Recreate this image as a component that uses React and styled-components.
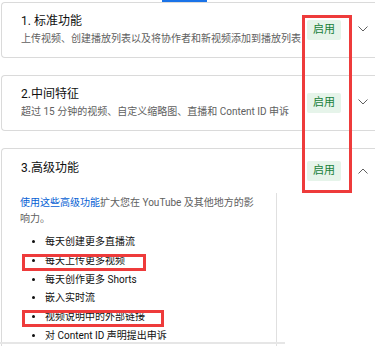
import React from 'react';
import styled, { createGlobalStyle } from 'styled-components';

const GlobalStyle = createGlobalStyle`
	html, body {
		margin: 0;
		padding: 0;
		background: #fff;
		overflow: hidden;
	}
	body {
		font-family: Roboto, "Noto Sans CJK SC", "Noto Sans", sans-serif;
	}
`;

const features = [
	{
		title: '1. 标准功能',
		desc: '上传视频、创建播放列表以及将协作者和新视频添加到播放列表',
	},
	{
		title: '2.中间特征',
		desc: '超过 15 分钟的视频、自定义缩略图、直播和 Content ID 申诉',
	},
];

const advanced = [
	'每天创建更多直播流',
	'每天上传更多视频',
	'每天创作更多 Shorts',
	'嵌入实时流',
	'视频说明中的外部链接',
	'对 Content ID 声明提出申诉',
];

const marks = [
	{ x: 302, y: 15, w: 50, h: 178 },
	{ x: 22, y: 254, w: 124, h: 17 },
	{ x: 22, y: 310, w: 142, h: 17 },
];

function Chevron({ up }) {
	return (
		<ChevronIcon viewBox="0 0 10 6" up={up ? 1 : 0}>
			<path
				d={up ? 'M0.5 5.5L5 1L9.5 5.5' : 'M0.5 0.5L5 5L9.5 0.5'}
				fill="none"
				stroke="#606060"
				strokeWidth="1"
			/>
		</ChevronIcon>
	);
}

function App() {
	return (
		<Page>
			<GlobalStyle />
			<TabStrip>
				<TabIndicator />
			</TabStrip>

			{features.map((item) => (
				<Card key={item.title}>
					<CardHeader>
						<TitleBlock>
							<Title>{item.title}</Title>
							<Subtitle>{item.desc}</Subtitle>
						</TitleBlock>
						<Badge>启用</Badge>
						<Chevron />
					</CardHeader>
				</Card>
			))}

			<Card open>
				<CardHeader compact>
					<TitleBlock lifted>
						<Title>3.高级功能</Title>
					</TitleBlock>
					<Badge>启用</Badge>
					<Chevron up />
				</CardHeader>
				<CardBody>
					<MainColumn>
						<Intro>
							<IntroLink>使用这些高级功能</IntroLink>
							扩大您在 YouTube 及其他地方的影响力。
						</Intro>
						<FeatureList>
							{advanced.map((text) => (
								<li key={text}>{text}</li>
							))}
						</FeatureList>
					</MainColumn>
					<SideColumn />
				</CardBody>
			</Card>

			{marks.map((m, i) => (
				<Mark key={i} $x={m.x} $y={m.y} $w={m.w} $h={m.h} />
			))}
			<ScrollThumb />
		</Page>
	);
}

const Page = styled.div`
	position: relative;
	width: 380px;
	height: 346px;
	overflow: hidden;
	background: #fff;
`;

const TabStrip = styled.div`
	height: 2px;
`;

const TabIndicator = styled.div`
	margin-left: 162px;
	width: 45px;
	height: 2px;
	background: #1a73e8;
`;

const Card = styled.section`
	box-sizing: border-box;
	width: 374px;
	margin: 0 0 17px 1px;
	border: 1px solid #dadada;
	border-right: none;
	border-radius: 4px 0 0 4px;
	background: #fff;
	min-height: ${(p) => (p.open ? '260px' : 'auto')};
`;

const CardHeader = styled.div`
	display: flex;
	align-items: center;
	height: ${(p) => (p.compact ? '44px' : '54px')};
	padding-left: 19px;
`;

const TitleBlock = styled.div`
	flex: 1;
	min-width: 0;
	padding-bottom: ${(p) => (p.lifted ? '6px' : '0')};
`;

const Title = styled.div`
	font-size: 12px;
	line-height: 18px;
	color: #0f0f0f;
`;

const Subtitle = styled.div`
	font-size: 10px;
	line-height: 18px;
	color: #606060;
	white-space: nowrap;
`;

const Badge = styled.span`
	flex: none;
	height: 20px;
	padding: 0 6px;
	font-size: 11px;
	line-height: 20px;
	color: #188038;
	background: #e6f4ea;
	border-radius: 2px;
`;

const ChevronIcon = styled.svg`
	flex: none;
	width: 10px;
	height: 6px;
	margin: ${(p) => (p.up ? '0 7px 0 17px' : '0 7px 2px 17px')};
`;

const CardBody = styled.div`
	display: grid;
	grid-template-columns: 275px 1fr;
	min-height: 200px;
`;

const MainColumn = styled.div`
	box-sizing: border-box;
	padding: 2px 17px 0 18px;
	border-right: 1px solid #e0e0e0;
`;

const SideColumn = styled.div``;

const Intro = styled.p`
	margin: 0;
	font-size: 10px;
	line-height: 16px;
	color: #606060;
`;

const IntroLink = styled.span`
	color: #065fd4;
`;

const FeatureList = styled.ul`
	margin: 6px 0 0;
	padding-left: 25px;
	font-size: 10px;
	line-height: 18.8px;
	color: #0f0f0f;
`;

const Mark = styled.div`
	position: absolute;
	box-sizing: border-box;
	left: ${(p) => p.$x}px;
	top: ${(p) => p.$y}px;
	width: ${(p) => p.$w}px;
	height: ${(p) => p.$h}px;
	border: 3px solid #ee3b3b;
	pointer-events: none;
`;

const ScrollThumb = styled.div`
	position: absolute;
	left: 0;
	top: 342px;
	width: 285px;
	height: 2px;
	background: #e6e6e6;
`;

export default App;
